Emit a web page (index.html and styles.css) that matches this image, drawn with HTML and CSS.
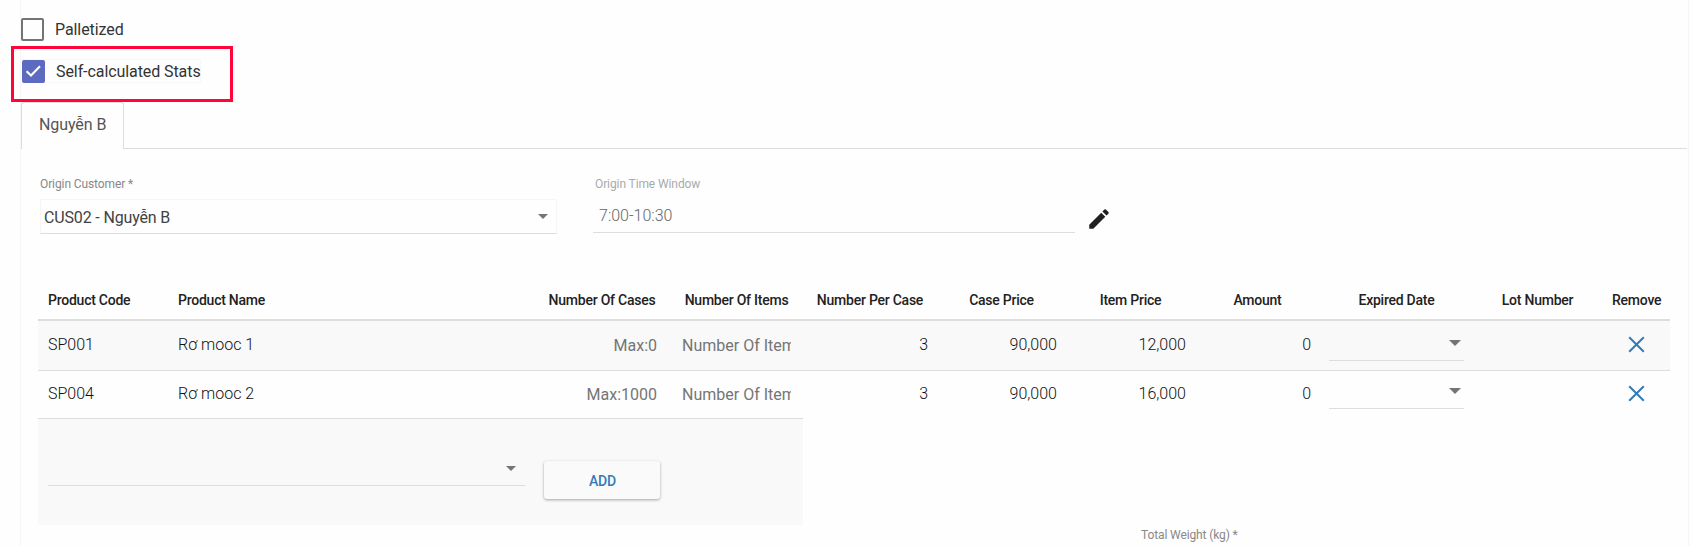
FILE: index.html
```html
<!DOCTYPE html>
<html lang="en">
<head>
<meta charset="utf-8">
<title>Order products</title>
<link rel="stylesheet" href="styles.css">
</head>
<body>
<main class="panel">
  <div class="check-row">
    <span class="box"></span><span class="check-label">Palletized</span>
  </div>
  <div class="check-row focused">
    <span class="box checked"><svg width="17" height="14" viewBox="0 0 17 14"><path d="M1.6 7.2 6 11.4 15 2.2" fill="none" stroke="#fff" stroke-width="2.1"/></svg></span><span class="check-label">Self-calculated Stats</span>
    <div class="highlight"></div>
  </div>
  <nav class="tabs"><a class="tab">Nguyễn B</a><span class="tab-line"></span></nav>
  <section class="fields">
    <div class="field customer">
      <label>Origin Customer *</label>
      <div class="select"><span>CUS02 - Nguyễn B</span><i class="arrow"></i></div>
    </div>
    <div class="field window">
      <label>Origin Time Window</label>
      <div class="input">7:00-10:30</div>
    </div>
    <svg class="pencil" width="26" height="26" viewBox="0 0 24 24"><path d="M3 17.25V21h3.75L17.81 9.94l-3.75-3.75L3 17.25zM20.71 7.04a1 1 0 0 0 0-1.41l-2.34-2.34a1 1 0 0 0-1.41 0l-1.83 1.83 3.75 3.75 1.83-1.83z" fill="#212121"/></svg>
  </section>
  <section class="products">
    <div class="row head">
      <span class="left">Product Code</span><span class="left">Product Name</span><span>Number Of Cases</span><span>Number Of Items</span><span>Number Per Case</span><span>Case Price</span><span>Item Price</span><span>Amount</span><span>Expired Date</span><span>Lot Number</span><span>Remove</span>
    </div>
    <div class="row first">
      <span>SP001</span><span>Rơ mooc 1</span><span class="entry num">Max:0</span><span class="entry items">Number Of Items</span><span class="num">3</span><span class="num">90,000</span><span class="num">12,000</span><span class="num">0</span><span class="date"><i class="arrow"></i></span><span></span><span class="remove"><svg width="17" height="17" viewBox="0 0 17 17"><path d="M1.2 1.2 15.8 15.8M15.8 1.2 1.2 15.8" stroke="#337ab7" stroke-width="2"/></svg></span>
    </div>
    <div class="row second">
      <span>SP004</span><span>Rơ mooc 2</span><span class="entry num">Max:1000</span><span class="entry items">Number Of Items</span><span class="num">3</span><span class="num">90,000</span><span class="num">16,000</span><span class="num">0</span><span class="date"><i class="arrow"></i></span><span></span><span class="remove"><svg width="17" height="17" viewBox="0 0 17 17"><path d="M1.2 1.2 15.8 15.8M15.8 1.2 1.2 15.8" stroke="#337ab7" stroke-width="2"/></svg></span>
    </div>
    <div class="adder">
      <div class="picker"><i class="arrow"></i></div>
      <button class="add">ADD</button>
    </div>
  </section>
  <div class="total">Total Weight (kg) *</div>
</main>
</body>
</html>
```
FILE: styles.css
```css
* { box-sizing: border-box; }
body {
  margin: 0;
  background: #fefefe;
  font-family: Roboto, "Noto Sans", sans-serif;
  font-size: 16px;
  color: #333;
}
.panel {
  width: 1669px;
  height: 546px;
  margin-left: 20px;
  padding-top: 17px;
  border: solid #f6f6f6;
  border-width: 0 1px;
  overflow: visible;
}
.check-row {
  display: flex;
  align-items: center;
  height: 24px;
}
.check-label {
  white-space: nowrap;
  letter-spacing: -.08px;
}
.check-row.focused {
  position: relative;
  width: 180px;
  margin-top: 18px;
  padding-left: 1px;
  border: 1px solid #f8f8f8;
  border-left: 0;
}
.box {
  flex: none;
  width: 23px;
  height: 23px;
  margin-right: 11px;
  border: 2px solid #747474;
  border-radius: 2px;
}
.box.checked {
  display: flex;
  align-items: center;
  justify-content: center;
  border: 0;
  background: #5c6bc0;
}
.highlight {
  position: absolute;
  left: -10px;
  top: -14px;
  width: 222px;
  height: 56px;
  border: 3px solid #ff0539;
}
.tabs {
  display: flex;
  height: 47px;
  margin-top: 19px;
}
.tab {
  width: 103px;
  height: 47px;
  padding-left: 17px;
  border: 1px solid #ddd;
  border-bottom: 0;
  border-radius: 3px 3px 0 0;
  line-height: 43px;
  letter-spacing: -.08px;
  color: #555;
}
.tab-line {
  width: 1563px;
  border-bottom: 1px solid #ddd;
}
.fields {
  display: flex;
  height: 135px;
  padding: 27px 0 0 19px;
}
.field label {
  display: block;
  height: 23px;
  font-size: 12px;
  line-height: 16px;
  letter-spacing: -.1px;
  color: #888;
}
.customer { width: 517px; }
.select {
  display: flex;
  align-items: center;
  justify-content: space-between;
  width: 517px;
  height: 35px;
  padding: 0 8px 0 3px;
  border: 1px solid #f6f6f6;
  border-bottom-color: #ddd;
  letter-spacing: -.15px;
  color: #424242;
}
.select span { padding-top: 1px; }
.arrow {
  width: 10px;
  height: 5px;
  background: #757575;
  clip-path: polygon(0 0, 100% 0, 50% 100%);
}
.window {
  width: 483px;
  margin-left: 36px;
}
.window label {
  padding-left: 2px;
  color: #aaa;
}
.input {
  width: 482px;
  height: 34px;
  padding-left: 6px;
  border-bottom: 1px solid #ddd;
  line-height: 33px;
  font-weight: 300;
  color: #666;
}
.pencil { margin: 30px 0 0 10px; }
.products {
  width: 1632px;
  margin-left: 17px;
}
.row {
  display: grid;
  grid-template-columns: 130px 366px 136px 133px 134px 129px 129px 125px 153px 129px 68px;
  font-weight: 300;
  color: #111;
}
.row > span {
  padding: 0 10px;
  white-space: nowrap;
}
.row > .num {
  padding-right: 9px;
  text-align: right;
}
.head {
  height: 37px;
  border-bottom: 2px solid #ddd;
  font-size: 14px;
  font-weight: 500;
  line-height: 33px;
  letter-spacing: -.24px;
  text-align: center;
  color: #222;
}
.row > .left { text-align: left; }
.first {
  height: 49px;
  background: #f9f9f9;
  line-height: 47px;
}
.second {
  height: 48px;
  border-top: 1px solid #ddd;
  line-height: 46px;
}
.row > .entry {
  padding: 1px 13px 0 0;
  font-weight: 400;
  color: #757575;
}
.row > .items {
  width: 109px;
  margin-left: 12px;
  padding-right: 0;
  overflow: hidden;
}
.row > .date {
  display: flex;
  justify-content: flex-end;
  width: 135px;
  height: 40px;
  margin-left: 9px;
  padding: 19px 3px 0 0;
  border-bottom: 1px solid #ddd;
}
.second > .date { height: 38px; padding-top: 17px; }
.date .arrow { width: 12px; height: 6px; }
.row > .remove { padding: 15px 0 0 26px; line-height: 0; }
.second > .remove { padding-top: 14px; }
.adder {
  display: flex;
  width: 765px;
  height: 107px;
  padding-left: 10px;
  border-top: 1px solid #ddd;
  background: #f9f9f9;
}
.picker {
  display: flex;
  justify-content: flex-end;
  width: 477px;
  height: 67px;
  padding: 47px 9px 0 0;
  border-bottom: 1px solid #ddd;
}
.add {
  width: 116px;
  height: 38px;
  margin: 42px 0 0 19px;
  padding: 1px 0 0 1px;
  border: 0;
  border-radius: 3px;
  background: #fafafa;
  box-shadow: 0 1px 3px rgba(0, 0, 0, .35);
  font: 500 14px Roboto, sans-serif;
  letter-spacing: -.2px;
  color: #337ab7;
}
.total {
  padding: 2px 0 0 1120px;
  font-size: 12px;
  line-height: 16px;
  letter-spacing: -.12px;
  color: #888;
}
```
